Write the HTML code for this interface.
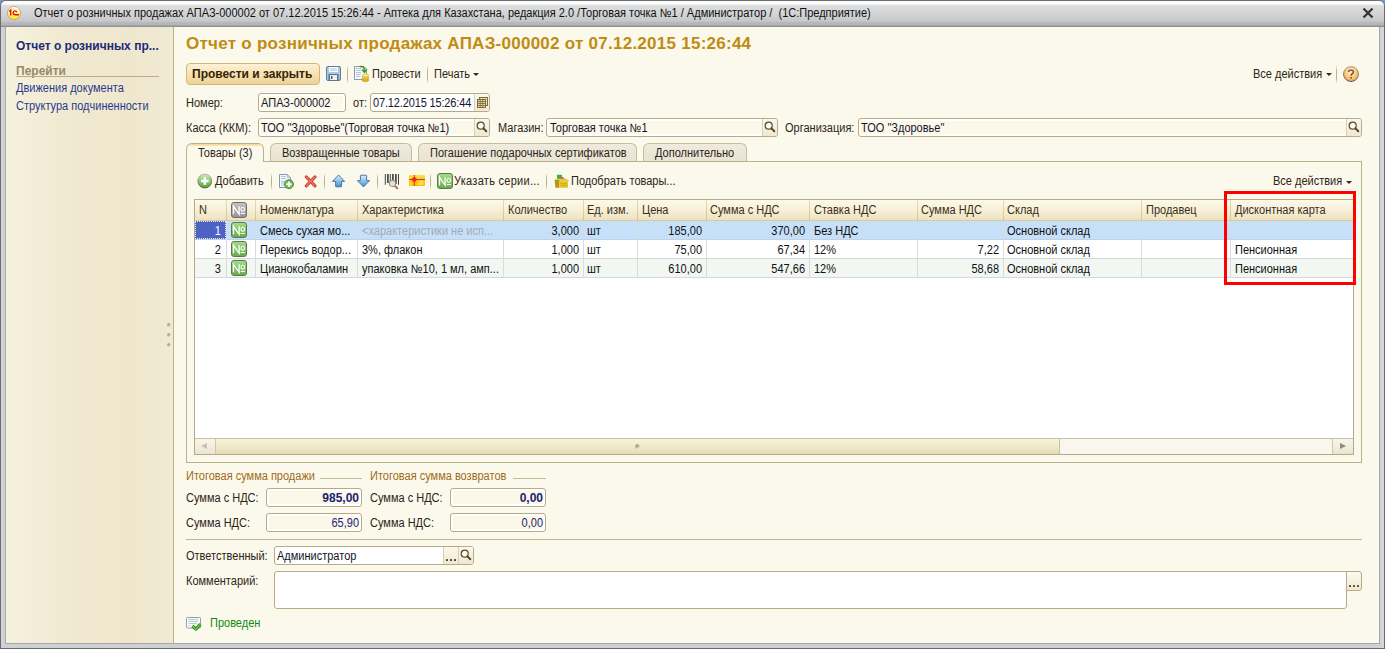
<!DOCTYPE html>
<html><head><meta charset="utf-8">
<style>
*{box-sizing:border-box;margin:0;padding:0}
html,body{width:1385px;height:649px;overflow:hidden;background:#6f9bd3}
body{position:relative;font-family:"Liberation Sans",sans-serif;font-size:11px;color:#2c2418}
.a{position:absolute}
.t{position:absolute;white-space:nowrap;font-size:12px;line-height:13px;transform:translateY(1px) scaleX(0.917);transform-origin:0 0}
.r{transform-origin:100% 0}
.b{font-weight:bold;font-size:12px;line-height:14px;transform:none}
#win{position:absolute;left:0;top:0;width:1385px;height:649px;border-radius:6px 6px 0 0;background:#6c6c6c;overflow:hidden}
#frame{position:absolute;left:1px;top:1px;width:1383px;height:647px;border-radius:5px 5px 0 0;
 background:linear-gradient(to right,#d4d5d9 0,#cfd0d4 4px,#cfd0d4 1378px,#d8d9dc 1383px)}
#titlebar{position:absolute;left:1px;top:1px;width:1383px;height:26px;border-radius:5px 5px 0 0;
 background:linear-gradient(to bottom,#fdfdfd 0,#fbfbfb 3px,#dddedf 4.5px,#d4d5d7 12px,#c7c8cb 20px,#b8b9bc 21.5px,#b3b4b7 24px,#949598 25px,#8c8d90 26px)}
#content{position:absolute;left:6px;top:27px;width:1373px;height:616px;background:#fbf9eb;border:0}
#frameR{position:absolute;left:1379px;top:27px;width:1px;height:617px;background:#a6a7aa}
#frameB{position:absolute;left:5px;top:643px;width:1375px;height:1px;background:#a6a7aa}
#frameL{position:absolute;left:5px;top:27px;width:1px;height:617px;background:#a6a7aa}
#left{position:absolute;left:6px;top:27px;width:167px;height:616px;
 background:linear-gradient(to right,#f6f1dd 0,#f0e9d1 40%,#efe7cd 75%,#f1ead4 100%)}
#divider{position:absolute;left:173px;top:27px;width:1px;height:616px;background:#b9b08a}

.inp{position:absolute;background:#fff;border:1px solid #b7ab85;border-radius:3px;overflow:hidden}
.ro{background:#fbf8ea;box-shadow:inset 0 0 0 2px #fff}
.btn{position:absolute;top:0;bottom:0;background:linear-gradient(to bottom,#fbf8ef,#efe8d2);border-left:1px solid #d9d0b2}
.sep{position:absolute;width:1px;background:linear-gradient(to bottom,rgba(190,175,130,0),#bfb28a 30%,#bfb28a 70%,rgba(190,175,130,0))}
.tab{position:absolute;top:143px;height:18px;border:1px solid #c6bd99;border-bottom:0;border-radius:6px 6px 0 0;background:linear-gradient(to bottom,#efebdd,#e8e3d2)}
.dd{position:absolute;width:0;height:0;border-left:3px solid transparent;border-right:3px solid transparent;border-top:3px solid #33281a}

.th{position:absolute;top:204px}
.cs{position:absolute;width:1px}
.r{text-align:right}
.no{position:absolute;width:16px;height:16px;border-radius:3px}
.nog{background:linear-gradient(to bottom,#9fd48a,#5ea642);border:1px solid #4f8c3a}
.nogr{background:linear-gradient(to bottom,#c8c8c8,#8f8f8f);border:1px solid #7a7a7a}
.no span{position:absolute;left:0;top:1px;width:14px;text-align:center;color:#fff;font-size:11px;line-height:13px;letter-spacing:-0.5px}
</style></head><body>
<svg width="0" height="0" style="position:absolute"><defs>
<linearGradient id="gnog" x1="0" y1="0" x2="0" y2="1"><stop offset="0" stop-color="#a6dc8c"/><stop offset="1" stop-color="#64ac48"/></linearGradient>
<linearGradient id="gnogr" x1="0" y1="0" x2="0" y2="1"><stop offset="0" stop-color="#c4c4c4"/><stop offset="1" stop-color="#929292"/></linearGradient>
<g id="nosym"><path d="M2.5 12.3V4.3L8.1 12.3V4.3" stroke="#fff" stroke-width="1.3" fill="none"/><ellipse cx="11.75" cy="7.3" rx="1.8" ry="2" stroke="#fff" stroke-width="1.1" fill="none"/><path d="M9.7 11.5H13.8" stroke="#fff" stroke-width="1.1"/></g>
</defs></svg>
<div id="win"></div>
<div id="frame"></div>
<div id="titlebar"></div>
<div id="content"></div>
<div id="frameL"></div><div id="frameR"></div><div id="frameB"></div>
<div id="left"></div>
<div id="divider"></div>

<!-- title bar -->
<svg class="a" style="left:6px;top:5px" width="16" height="16" viewBox="0 0 16 16">
 <defs><linearGradient id="g1c" x1="0" y1="0" x2="0" y2="1"><stop offset="0" stop-color="#fffdf0"/><stop offset="0.5" stop-color="#fff498"/><stop offset="0.8" stop-color="#ffe838"/><stop offset="1" stop-color="#ffe020"/></linearGradient></defs>
 <circle cx="8" cy="8" r="6.7" fill="url(#g1c)" stroke="#c8a07c" stroke-width="0.9"/>
 <path d="M3.2 6.6L4.7 5.1V10.6" stroke="#e8100c" stroke-width="1.4" fill="none"/>
 <path d="M10.7 7.3C10.2 5.5 7.3 5.2 7.1 7.8C7 9.6 8 9.8 13.1 9.8" stroke="#e8100c" stroke-width="1.4" fill="none"/>
</svg>
<div class="t" style="left:34px;top:6px;color:#111">Отчет о розничных продажах АПАЗ-000002 от 07.12.2015 15:26:44 - Аптека для Казахстана, редакция 2.0 /Торговая точка №1 / Администратор /&nbsp; (1С:Предприятие)</div>
<svg class="a" style="left:1362px;top:7px" width="12" height="12" viewBox="0 0 12 12">
 <path d="M1.5 1.5 L10.5 10.5 M10.5 1.5 L1.5 10.5" stroke="#333" stroke-width="2.2"/>
</svg>

<!-- left panel -->
<div class="t b" style="left:16px;top:39px;color:#1c2a78">Отчет о розничных пр...</div>
<div class="t b" style="left:16px;top:64px;color:#948a6a">Перейти</div>
<div class="a" style="left:16px;top:76px;width:143px;height:1px;background:#b8ae86"></div>
<div class="t" style="left:16px;top:81px;color:#2a3a8c">Движения документа</div>
<div class="t" style="left:16px;top:99px;color:#2a3a8c">Структура подчиненности</div>


<!-- main title -->
<div class="t" style="left:186px;top:34px;font-weight:bold;font-size:17px;line-height:20px;color:#c08b12;letter-spacing:0.26px;transform:none">Отчет о розничных продажах АПАЗ-000002 от 07.12.2015 15:26:44</div>

<!-- toolbar -->
<div class="a" style="left:186px;top:63px;width:134px;height:22px;border:1px solid #d3b57a;border-radius:4px;background:linear-gradient(to bottom,#fdf2d6 0,#f8e4b4 45%,#efd196 100%)"></div>
<div class="t b" style="left:192px;top:67px;color:#33240c">Провести и закрыть</div>
<svg class="a" style="left:326px;top:66px" width="15" height="15" viewBox="0 0 15 15">
 <rect x="0.5" y="0.5" width="14" height="14" rx="1.5" fill="#a9c9e3" stroke="#5f7f98"/>
 <rect x="3" y="1" width="9" height="5" fill="#fff"/>
 <path d="M4 2.8H11M4 4.3H11" stroke="#9cc0de" stroke-width="0.8"/>
 <rect x="2.5" y="8" width="10" height="6.5" fill="#5a7388"/>
 <rect x="4" y="9" width="7" height="5" fill="#f0f0f0"/>
 <rect x="5" y="10" width="1.5" height="3" fill="#4a6075"/>
</svg>
<div class="sep" style="left:347px;top:65px;height:19px"></div>
<svg class="a" style="left:354px;top:65px" width="16" height="18" viewBox="0 0 16 18">
 <path d="M0.5 1.5H10L12.5 4V14.5H0.5Z" fill="#f7fafd" stroke="#7f9ab2"/>
 <path d="M2 3.5H7M2 5.5H7M2 7.5H7M2 9.5H6.5M2 11.5H6.5" stroke="#aab9c8" stroke-width="0.9"/>
 <path d="M5.8 1.6C8.6 1.2 10.4 2.4 10.4 4.8" stroke="#3f9c22" stroke-width="1.7" fill="none"/>
 <path d="M7.2 4.6H13.6L10.4 8.6Z" fill="#3f9c22"/>
 <ellipse cx="11.4" cy="15.2" rx="3.3" ry="1.4" fill="#e8b020" stroke="#c8900e" stroke-width="0.6"/>
 <ellipse cx="11.4" cy="13.6" rx="3.3" ry="1.4" fill="#f0c838" stroke="#c8900e" stroke-width="0.6"/>
 <ellipse cx="11.4" cy="12" rx="3.3" ry="1.4" fill="#f6da58" stroke="#cc9814" stroke-width="0.6"/>
 <ellipse cx="11.4" cy="10.4" rx="3.3" ry="1.4" fill="#fdf0a0" stroke="#d4a420" stroke-width="0.6"/>
</svg>
<div class="t" style="left:372px;top:67px">Провести</div>
<div class="sep" style="left:427px;top:65px;height:19px"></div>
<div class="t" style="left:434px;top:67px">Печать</div>
<div class="dd" style="left:473px;top:73px"></div>
<div class="t" style="left:1253px;top:67px">Все действия</div>
<div class="dd" style="left:1326px;top:73px"></div>
<div class="sep" style="left:1336px;top:65px;height:19px"></div>
<svg class="a" style="left:1342px;top:65px" width="18" height="18" viewBox="0 0 18 18">
 <defs><radialGradient id="ghelp" cx="0.5" cy="0.4" r="0.6"><stop offset="0" stop-color="#fff4e0"/><stop offset="0.45" stop-color="#fbd396"/><stop offset="1" stop-color="#f2a446"/></radialGradient>
 <linearGradient id="ghelpb" x1="0" y1="0" x2="0" y2="1"><stop offset="0" stop-color="#b8aa96"/><stop offset="1" stop-color="#5c5a64"/></linearGradient></defs>
 <circle cx="9" cy="9" r="7.5" fill="url(#ghelp)" stroke="url(#ghelpb)" stroke-width="1"/>
 <path d="M6.6 6.9C6.6 4.5 11.4 4.5 11.4 6.9C11.4 8.6 9.1 8.7 9.1 10.8" stroke="#7a4c24" stroke-width="1.4" fill="none"/>
 <rect x="8.3" y="12" width="1.6" height="1.5" fill="#7a4c24"/>
</svg>

<!-- Номер row -->
<div class="t" style="left:186px;top:96px">Номер:</div>
<div class="inp ro" style="left:258px;top:93px;width:88px;height:19px"></div>
<div class="t" style="left:261px;top:96px;color:#15152a">АПАЗ-000002</div>
<div class="t" style="left:353px;top:96px">от:</div>
<div class="inp" style="left:370px;top:93px;width:120px;height:19px"><div class="btn" style="left:103px;width:16px"></div></div>
<div class="t" style="left:373px;top:96px;color:#15152a;letter-spacing:-0.16px">07.12.2015 15:26:44</div>
<svg class="a" style="left:477px;top:97px" width="11" height="11" viewBox="0 0 11 11">
 <rect x="2.5" y="0.5" width="8" height="8" fill="#e9dfb8" stroke="#6e5e28" stroke-width="0.9"/>
 <rect x="0.5" y="2.5" width="8" height="8" fill="#eee5c2" stroke="#6e5e28" stroke-width="0.9"/>
 <path d="M0.5 4.5H8.5M0.5 6.5H8.5M0.5 8.5H8.5M3.2 2.5V10.5M5.8 2.5V10.5" stroke="#6e5e28" stroke-width="0.8"/>
</svg>

<!-- Касса row -->
<div class="t" style="left:186px;top:121px">Касса (ККМ):</div>
<div class="inp ro" style="left:258px;top:118px;width:232px;height:19px"><div class="btn" style="left:215px;width:16px"></div></div>
<div class="t" style="left:261px;top:121px;color:#15152a">ТОО "Здоровье"(Торговая точка №1)</div>
<div class="t" style="left:498px;top:121px">Магазин:</div>
<div class="inp ro" style="left:546px;top:118px;width:232px;height:19px"><div class="btn" style="left:215px;width:16px"></div></div>
<div class="t" style="left:550px;top:121px;color:#15152a">Торговая точка №1</div>
<div class="t" style="left:785px;top:121px">Организация:</div>
<div class="inp ro" style="left:858px;top:118px;width:504px;height:19px"><div class="btn" style="left:487px;width:16px"></div></div>
<div class="t" style="left:861px;top:121px;color:#15152a">ТОО "Здоровье"</div>

<!-- tabs -->
<div class="a" style="left:186px;top:161px;width:1176px;height:302px;border:1px solid #bbb18c"></div>
<div class="tab" style="left:270px;width:142px"></div>
<div class="tab" style="left:418px;width:219px"></div>
<div class="tab" style="left:643px;width:104px"></div>
<div class="a" style="left:186px;top:143px;width:78px;height:19px;border:1px solid #bbb18c;border-bottom:0;border-radius:6px 6px 0 0;background:#fbf9eb"></div>
<div class="a" style="left:190px;top:144px;width:72px;height:2px;border-radius:2px 3px 0 0;background:linear-gradient(to bottom,#f7d590,#fbe6bc)"></div>
<div class="t" style="left:198px;top:146px">Товары (3)</div>
<div class="t" style="left:282px;top:146px">Возвращенные товары</div>
<div class="t" style="left:430px;top:146px">Погашение подарочных сертификатов</div>
<div class="t" style="left:655px;top:146px">Дополнительно</div>

<!-- table toolbar -->
<svg class="a" style="left:196px;top:172px" width="18" height="18" viewBox="0 0 18 18">
 <defs><linearGradient id="gadd" x1="0" y1="0" x2="0" y2="1"><stop offset="0" stop-color="#cdeab8"/><stop offset="0.5" stop-color="#8ccc6a"/><stop offset="1" stop-color="#5aa43e"/></linearGradient>
 <linearGradient id="gaddb" x1="0" y1="0" x2="0" y2="1"><stop offset="0" stop-color="#b8b8b0"/><stop offset="1" stop-color="#505848"/></linearGradient></defs>
 <circle cx="8.8" cy="9" r="6.9" fill="url(#gadd)" stroke="url(#gaddb)" stroke-width="1"/>
 <path d="M8.8 5.2V12.8M5 9H12.6" stroke="#fff" stroke-width="2.5"/>
</svg>
<div class="t" style="left:215px;top:174px">Добавить</div>
<div class="sep" style="left:271px;top:173px;height:17px"></div>
<svg class="a" style="left:278px;top:173px" width="17" height="17" viewBox="0 0 17 17">
 <path d="M1.5 1.5H9.5L12.5 4.5V14.5H1.5Z" fill="#f4f8fc" stroke="#7f9ab2"/>
 <path d="M9.5 1.5V4.5H12.5" fill="#c8d8e6" stroke="#9fb4c6" stroke-width="0.8"/>
 <path d="M3.2 3.6H8M3.2 5.6H8M3.2 8.4H7M3.2 10H6.5M3.2 12H6.5" stroke="#a8b8c8" stroke-width="0.9"/>
 <circle cx="11" cy="11.2" r="4.4" fill="#72bc52" stroke="#4e7e3a" stroke-width="1"/>
 <path d="M11 8.6V13.8M8.4 11.2H13.6" stroke="#fff" stroke-width="1.9"/>
</svg>
<svg class="a" style="left:304px;top:175px" width="13" height="13" viewBox="0 0 13 13">
 <path d="M2.3 1.9L11 10.9M11 1.9L2.3 10.9" stroke="#cf3a30" stroke-width="3" stroke-linecap="round"/>
 <path d="M2.3 1.9L11 10.9M11 1.9L2.3 10.9" stroke="#f08070" stroke-width="1.2" stroke-linecap="round"/>
</svg>
<div class="sep" style="left:324px;top:173px;height:17px"></div>
<svg class="a" style="left:331px;top:174px" width="15" height="14" viewBox="0 0 15 14">
 <defs><linearGradient id="garr" x1="0" y1="0" x2="0" y2="1"><stop offset="0" stop-color="#dff0fd"/><stop offset="1" stop-color="#3f8fd4"/></linearGradient></defs>
 <path d="M7.6 1L13.6 7.4H10.6V12.2Q10.6 12.8 10 12.8H5.2Q4.6 12.8 4.6 12.2V7.4H1.4Z" fill="url(#garr)" stroke="#3e6d98" stroke-width="0.9" stroke-linejoin="round"/>
</svg>
<svg class="a" style="left:356px;top:174px" width="15" height="14" viewBox="0 0 15 14">
 <path d="M7.5 12.9L13.6 6.6H10.6V1.8Q10.6 1.2 10 1.2H5Q4.4 1.2 4.4 1.8V6.6H1.4Z" fill="url(#garr)" stroke="#3e6d98" stroke-width="0.9" stroke-linejoin="round"/>
</svg>
<div class="sep" style="left:377px;top:173px;height:17px"></div>
<svg class="a" style="left:384px;top:173px" width="16" height="17" viewBox="0 0 16 17">
 <path d="M1.3 1V11.8M6.3 1V11.8M14.5 1V11.8" stroke="#2e2e2e" stroke-width="0.9"/>
 <path d="M3.9 1V10M8.9 1V10M11.9 1V11" stroke="#2e2e2e" stroke-width="1.5"/>
 <path d="M10.7 12.6L13.3 15.3" stroke="#a8704c" stroke-width="2" stroke-linecap="round"/>
 <circle cx="8.5" cy="10.4" r="3.1" fill="#cfe2fa" stroke="#b48a6a" stroke-width="1.1"/>
</svg>
<svg class="a" style="left:408px;top:174px" width="18" height="13" viewBox="0 0 18 13">
 <defs><linearGradient id="gcard" x1="0" y1="0" x2="0" y2="1"><stop offset="0" stop-color="#ffe23a"/><stop offset="1" stop-color="#ffb800"/></linearGradient></defs>
 <rect x="1" y="1" width="16" height="11" rx="1.2" fill="url(#gcard)"/>
 <path d="M1 5.5H17M6.3 1V12" stroke="#d8281a" stroke-width="0.9"/>
 <path d="M6.3 3V8M3.8 5.5H8.8M4.5 3.7L8.1 7.3M8.1 3.7L4.5 7.3" stroke="#e8301e" stroke-width="1.3"/>
 <path d="M11.5 3.6L13 2.8L14.5 3.4L15.5 2.8M11 8H14.8M2 10H4M9.5 10H15.5" stroke="#fff8d8" stroke-width="0.8"/>
</svg>
<div class="sep" style="left:430px;top:173px;height:17px"></div>
<svg class="a" style="left:437px;top:173px" width="16" height="16" viewBox="0 0 16 16"><rect x="0.5" y="0.5" width="15" height="15" rx="2.4" fill="url(#gnog)" stroke="#5b7a4c"/><use href="#nosym"/></svg>
<div class="t" style="left:454px;top:174px;letter-spacing:0.3px">Указать серии...</div>
<div class="sep" style="left:546px;top:173px;height:17px"></div>
<svg class="a" style="left:554px;top:173px" width="16" height="16" viewBox="0 0 16 16">
 <rect x="3" y="1.8" width="5" height="5" fill="#22c030"/>
 <rect x="5.2" y="4" width="4.5" height="3.6" fill="#f06a30"/>
 <rect x="7.1" y="5.8" width="4.8" height="2" fill="#3a70d8"/>
 <path d="M0.2 6.6L3 5.8L14.8 6.4L14.8 8.2L5 8.2Z" fill="#e8d040"/>
 <path d="M0.6 7H5.4V14.8H1.4Z" fill="#b89418"/>
 <path d="M5.4 8.2H14V14.7H5.4Z" fill="#e6c624"/>
 <path d="M6.4 10.4H13M6.4 12.4H13" stroke="#cfa818" stroke-width="0.8"/>
</svg>
<div class="t" style="left:571px;top:174px">Подобрать товары...</div>
<div class="t" style="left:1273px;top:174px">Все действия</div>
<div class="dd" style="left:1346px;top:181px"></div>
<!-- table -->
<div class="a" style="left:194px;top:199px;width:1160px;height:256px;border:1px solid #b3aa88;background:#fff"></div>
<div class="a" style="left:195px;top:200px;width:1158px;height:20px;background:linear-gradient(to bottom,#fcf9ea 0,#f6efd6 55%,#ede2bd 100%)"></div>
<div class="a" style="left:195px;top:220px;width:1158px;height:1px;background:#d9cb9c"></div>
<div class="a" style="left:195px;top:221px;width:1158px;height:18px;background:#c7e0fa"></div>
<div class="a" style="left:195px;top:239px;width:1158px;height:1px;background:#c2d2e2"></div>
<div class="a" style="left:195px;top:240px;width:1158px;height:18px;background:#fff"></div>
<div class="a" style="left:195px;top:258px;width:1158px;height:1px;background:#d3d8de"></div>
<div class="a" style="left:195px;top:259px;width:1158px;height:18px;background:#f2f7f2"></div>
<div class="a" style="left:195px;top:277px;width:1158px;height:1px;background:#d3d8de"></div>
<div class="cs" style="left:226px;top:200px;height:20px;background:linear-gradient(to bottom,#e6dcb8,#d2c494)"></div>
<div class="cs" style="left:226px;top:221px;height:57px;background:#d7dce2"></div>
<div class="cs" style="left:255px;top:200px;height:20px;background:linear-gradient(to bottom,#e6dcb8,#d2c494)"></div>
<div class="cs" style="left:255px;top:221px;height:57px;background:#d7dce2"></div>
<div class="cs" style="left:357px;top:200px;height:20px;background:linear-gradient(to bottom,#e6dcb8,#d2c494)"></div>
<div class="cs" style="left:357px;top:221px;height:57px;background:#d7dce2"></div>
<div class="cs" style="left:503px;top:200px;height:20px;background:linear-gradient(to bottom,#e6dcb8,#d2c494)"></div>
<div class="cs" style="left:503px;top:221px;height:57px;background:#d7dce2"></div>
<div class="cs" style="left:583px;top:200px;height:20px;background:linear-gradient(to bottom,#e6dcb8,#d2c494)"></div>
<div class="cs" style="left:583px;top:221px;height:57px;background:#d7dce2"></div>
<div class="cs" style="left:637px;top:200px;height:20px;background:linear-gradient(to bottom,#e6dcb8,#d2c494)"></div>
<div class="cs" style="left:637px;top:221px;height:57px;background:#d7dce2"></div>
<div class="cs" style="left:706px;top:200px;height:20px;background:linear-gradient(to bottom,#e6dcb8,#d2c494)"></div>
<div class="cs" style="left:706px;top:221px;height:57px;background:#d7dce2"></div>
<div class="cs" style="left:809px;top:200px;height:20px;background:linear-gradient(to bottom,#e6dcb8,#d2c494)"></div>
<div class="cs" style="left:809px;top:221px;height:57px;background:#d7dce2"></div>
<div class="cs" style="left:917px;top:200px;height:20px;background:linear-gradient(to bottom,#e6dcb8,#d2c494)"></div>
<div class="cs" style="left:917px;top:221px;height:57px;background:#d7dce2"></div>
<div class="cs" style="left:1003px;top:200px;height:20px;background:linear-gradient(to bottom,#e6dcb8,#d2c494)"></div>
<div class="cs" style="left:1003px;top:221px;height:57px;background:#d7dce2"></div>
<div class="cs" style="left:1141px;top:200px;height:20px;background:linear-gradient(to bottom,#e6dcb8,#d2c494)"></div>
<div class="cs" style="left:1141px;top:221px;height:57px;background:#d7dce2"></div>
<div class="cs" style="left:1230px;top:200px;height:20px;background:linear-gradient(to bottom,#e6dcb8,#d2c494)"></div>
<div class="cs" style="left:1230px;top:221px;height:57px;background:#d7dce2"></div>
<div class="a" style="left:195px;top:221px;width:31px;height:18px;background:#4d62c2;border:1px dotted #e8ecff"></div>
<div class="t" style="left:199px;top:203px;color:#3a2e18">N</div>
<div class="t" style="left:260px;top:203px;color:#3a2e18">Номенклатура</div>
<div class="t" style="left:362px;top:203px;color:#3a2e18">Характеристика</div>
<div class="t" style="left:508px;top:203px;color:#3a2e18">Количество</div>
<div class="t" style="left:587px;top:203px;color:#3a2e18">Ед. изм.</div>
<div class="t" style="left:642px;top:203px;color:#3a2e18">Цена</div>
<div class="t" style="left:710px;top:203px;color:#3a2e18">Сумма с НДС</div>
<div class="t" style="left:814px;top:203px;color:#3a2e18">Ставка НДС</div>
<div class="t" style="left:921px;top:203px;color:#3a2e18">Сумма НДС</div>
<div class="t" style="left:1007px;top:203px;color:#3a2e18">Склад</div>
<div class="t" style="left:1146px;top:203px;color:#3a2e18">Продавец</div>
<div class="t" style="left:1235px;top:203px;color:#3a2e18">Дисконтная карта</div>
<svg class="a" style="left:231px;top:202px" width="16" height="16" viewBox="0 0 16 16"><rect x="0.5" y="0.5" width="15" height="15" rx="2.4" fill="url(#gnogr)" stroke="#6e6e6e"/><use href="#nosym"/></svg>
<svg class="a" style="left:231px;top:222px" width="16" height="16" viewBox="0 0 16 16"><rect x="0.5" y="0.5" width="15" height="15" rx="2.4" fill="url(#gnog)" stroke="#5b7a4c"/><use href="#nosym"/></svg>
<div class="t r" style="left:101px;width:120px;top:224px;color:#fff">1</div>
<div class="t" style="left:260px;top:224px;color:#111">Смесь сухая мо...</div>
<div class="t" style="left:362px;top:224px;color:#a3abb4">&lt;характеристики не исп...</div>
<div class="t r" style="left:459px;width:120px;top:224px;color:#111">3,000</div>
<div class="t" style="left:587px;top:224px;color:#111">шт</div>
<div class="t r" style="left:582px;width:120px;top:224px;color:#111">185,00</div>
<div class="t r" style="left:685px;width:120px;top:224px;color:#111">370,00</div>
<div class="t" style="left:814px;top:224px;color:#111">Без НДС</div>
<div class="t" style="left:1007px;top:224px;color:#111">Основной склад</div>
<svg class="a" style="left:231px;top:241px" width="16" height="16" viewBox="0 0 16 16"><rect x="0.5" y="0.5" width="15" height="15" rx="2.4" fill="url(#gnog)" stroke="#5b7a4c"/><use href="#nosym"/></svg>
<div class="t r" style="left:101px;width:120px;top:243px;color:#111">2</div>
<div class="t" style="left:260px;top:243px;color:#111">Перекись водор...</div>
<div class="t" style="left:362px;top:243px;color:#111">3%, флакон</div>
<div class="t r" style="left:459px;width:120px;top:243px;color:#111">1,000</div>
<div class="t" style="left:587px;top:243px;color:#111">шт</div>
<div class="t r" style="left:582px;width:120px;top:243px;color:#111">75,00</div>
<div class="t r" style="left:685px;width:120px;top:243px;color:#111">67,34</div>
<div class="t" style="left:814px;top:243px;color:#111">12%</div>
<div class="t r" style="left:879px;width:120px;top:243px;color:#111">7,22</div>
<div class="t" style="left:1007px;top:243px;color:#111">Основной склад</div>
<div class="t" style="left:1235px;top:243px;color:#111">Пенсионная</div>
<svg class="a" style="left:231px;top:260px" width="16" height="16" viewBox="0 0 16 16"><rect x="0.5" y="0.5" width="15" height="15" rx="2.4" fill="url(#gnog)" stroke="#5b7a4c"/><use href="#nosym"/></svg>
<div class="t r" style="left:101px;width:120px;top:262px;color:#111">3</div>
<div class="t" style="left:260px;top:262px;color:#111">Цианокобаламин</div>
<div class="t" style="left:362px;top:262px;color:#111">упаковка №10, 1 мл, амп...</div>
<div class="t r" style="left:459px;width:120px;top:262px;color:#111">1,000</div>
<div class="t" style="left:587px;top:262px;color:#111">шт</div>
<div class="t r" style="left:582px;width:120px;top:262px;color:#111">610,00</div>
<div class="t r" style="left:685px;width:120px;top:262px;color:#111">547,66</div>
<div class="t" style="left:814px;top:262px;color:#111">12%</div>
<div class="t r" style="left:879px;width:120px;top:262px;color:#111">58,68</div>
<div class="t" style="left:1007px;top:262px;color:#111">Основной склад</div>
<div class="t" style="left:1235px;top:262px;color:#111">Пенсионная</div>
<div class="a" style="left:195px;top:438px;width:1158px;height:16px;background:#f8f6ef;border-top:1px solid #c9c0a0"></div>
<div class="a" style="left:195px;top:439px;width:21px;height:15px;background:linear-gradient(to bottom,#f8f5ea,#ece5cf);border-right:1px solid #d0c7a8"></div>
<div class="a" style="left:216px;top:439px;width:844px;height:15px;background:linear-gradient(to bottom,#f9f4e0,#efe6c6 60%,#e6dbb6);border-right:1px solid #c9bf9c"></div>
<div class="a" style="left:1332px;top:439px;width:21px;height:15px;background:linear-gradient(to bottom,#f8f5ea,#ece5cf);border-left:1px solid #d0c7a8"></div>
<div class="a" style="left:201px;top:443px;width:0;height:0;border-top:3.5px solid transparent;border-bottom:3.5px solid transparent;border-right:6px solid #c6c2b6"></div>
<div class="a" style="left:1340px;top:443px;width:0;height:0;border-top:3.5px solid transparent;border-bottom:3.5px solid transparent;border-left:6px solid #8c8a84"></div>
<div class="a" style="left:635px;top:444px;width:5px;height:5px;border-radius:50%;background:radial-gradient(circle at 30% 30%,#a29c86 0,#bdb7a0 40%,#e2dcc8 70%,rgba(255,252,235,0.6) 100%)"></div>
<div class="a" style="left:1224px;top:191px;width:132px;height:94px;border:3px solid #ff0000"></div>
<!-- magnifiers -->
<svg class="a" style="left:476px;top:121px" width="12" height="12" viewBox="0 0 12 12"><circle cx="4.7" cy="4.7" r="3.5" fill="#fffdf6" stroke="#5a4a28" stroke-width="1.2"/><path d="M7.3 7.3L10.3 10.3" stroke="#5a4a28" stroke-width="2" stroke-linecap="round"/></svg>
<svg class="a" style="left:764px;top:121px" width="12" height="12" viewBox="0 0 12 12"><circle cx="4.7" cy="4.7" r="3.5" fill="#fffdf6" stroke="#5a4a28" stroke-width="1.2"/><path d="M7.3 7.3L10.3 10.3" stroke="#5a4a28" stroke-width="2" stroke-linecap="round"/></svg>
<svg class="a" style="left:1348px;top:121px" width="12" height="12" viewBox="0 0 12 12"><circle cx="4.7" cy="4.7" r="3.5" fill="#fffdf6" stroke="#5a4a28" stroke-width="1.2"/><path d="M7.3 7.3L10.3 10.3" stroke="#5a4a28" stroke-width="2" stroke-linecap="round"/></svg>

<!-- splitter dots -->
<div class="a" style="left:167px;top:323px;width:4px;height:4px;border-radius:50%;background:radial-gradient(circle at 30% 30%,#a29c86 0,#bdb7a0 40%,#e2dcc8 70%,rgba(255,252,235,0.6) 100%)"></div>
<div class="a" style="left:167px;top:333px;width:4px;height:4px;border-radius:50%;background:radial-gradient(circle at 30% 30%,#a29c86 0,#bdb7a0 40%,#e2dcc8 70%,rgba(255,252,235,0.6) 100%)"></div>
<div class="a" style="left:167px;top:343px;width:4px;height:4px;border-radius:50%;background:radial-gradient(circle at 30% 30%,#a29c86 0,#bdb7a0 40%,#e2dcc8 70%,rgba(255,252,235,0.6) 100%)"></div>

<!-- totals -->
<div class="t" style="left:186px;top:469px;color:#9e6c1c">Итоговая сумма продажи</div>
<div class="a" style="left:320px;top:478px;width:42px;height:1px;background:#c5bb96"></div>
<div class="t" style="left:186px;top:491px">Сумма с НДС:</div>
<div class="inp ro" style="left:266px;top:488px;width:96px;height:19px"></div>
<div class="t r b" style="left:239px;width:120px;top:491px;color:#1a2470">985,00</div>
<div class="t" style="left:186px;top:516px">Сумма НДС:</div>
<div class="inp ro" style="left:266px;top:513px;width:96px;height:19px"></div>
<div class="t r" style="left:239px;width:120px;top:516px;color:#1a2470">65,90</div>

<div class="t" style="left:370px;top:469px;color:#9e6c1c">Итоговая сумма возвратов</div>
<div class="a" style="left:513px;top:478px;width:33px;height:1px;background:#c5bb96"></div>
<div class="t" style="left:370px;top:491px">Сумма с НДС:</div>
<div class="inp ro" style="left:450px;top:488px;width:96px;height:19px"></div>
<div class="t r b" style="left:423px;width:120px;top:491px;color:#1a2470">0,00</div>
<div class="t" style="left:370px;top:516px">Сумма НДС:</div>
<div class="inp ro" style="left:450px;top:513px;width:96px;height:19px"></div>
<div class="t r" style="left:423px;width:120px;top:516px;color:#1a2470">0,00</div>

<div class="a" style="left:186px;top:539px;width:1176px;height:1px;background:#c2b890"></div>

<!-- bottom -->
<div class="t" style="left:186px;top:549px">Ответственный:</div>
<div class="inp" style="left:274px;top:546px;width:200px;height:19px"><div class="btn" style="left:168px;width:15px"></div><div class="btn" style="left:183px;width:16px"></div></div>
<div class="t" style="left:277px;top:549px;color:#15152a">Администратор</div>
<div class="a" style="left:446px;top:559px;width:2px;height:2px;border-radius:0.5px;background:#5a4212"></div>
<div class="a" style="left:450px;top:559px;width:2px;height:2px;border-radius:0.5px;background:#5a4212"></div>
<div class="a" style="left:454px;top:559px;width:2px;height:2px;border-radius:0.5px;background:#5a4212"></div>
<svg class="a" style="left:460px;top:549px" width="12" height="12" viewBox="0 0 12 12"><circle cx="4.7" cy="4.7" r="3.5" fill="#fffdf6" stroke="#5a4a28" stroke-width="1.2"/><path d="M7.3 7.3L10.3 10.3" stroke="#5a4a28" stroke-width="2" stroke-linecap="round"/></svg>
<div class="t" style="left:186px;top:574px">Комментарий:</div>
<div class="inp" style="left:274px;top:571px;width:1073px;height:38px;border-top-right-radius:0"></div>
<div class="a" style="left:1346px;top:571px;width:16px;height:20px;border:1px solid #b7ab85;border-radius:0 3px 3px 0;background:linear-gradient(to bottom,#fcfaf2,#efe8d2)"></div>
<div class="a" style="left:1349px;top:585px;width:2px;height:2px;border-radius:0.5px;background:#6a4a08"></div>
<div class="a" style="left:1353px;top:585px;width:2px;height:2px;border-radius:0.5px;background:#6a4a08"></div>
<div class="a" style="left:1357px;top:585px;width:2px;height:2px;border-radius:0.5px;background:#6a4a08"></div>

<svg class="a" style="left:185px;top:616px" width="18" height="15" viewBox="0 0 18 15">
 <rect x="1.5" y="1.5" width="14" height="10.5" rx="0.8" fill="#fbfcfd" stroke="#8ea0b0"/>
 <path d="M3.5 3.6H13M3.5 5.5H13M3.5 7.5H12M3.5 9.5H5.5" stroke="#a9b8c6" stroke-width="0.8"/>
 <path d="M7.4 10L10.9 13.1L15.4 8.2" stroke="#2e8a1e" stroke-width="3.2" fill="none" stroke-linejoin="round"/>
 <path d="M7.4 10L10.9 13.1L15.4 8.2" stroke="#62c040" stroke-width="1.6" fill="none" stroke-linejoin="round"/>
</svg>
<div class="t" style="left:210px;top:616px;color:#0f8a12">Проведен</div>

</body></html>
